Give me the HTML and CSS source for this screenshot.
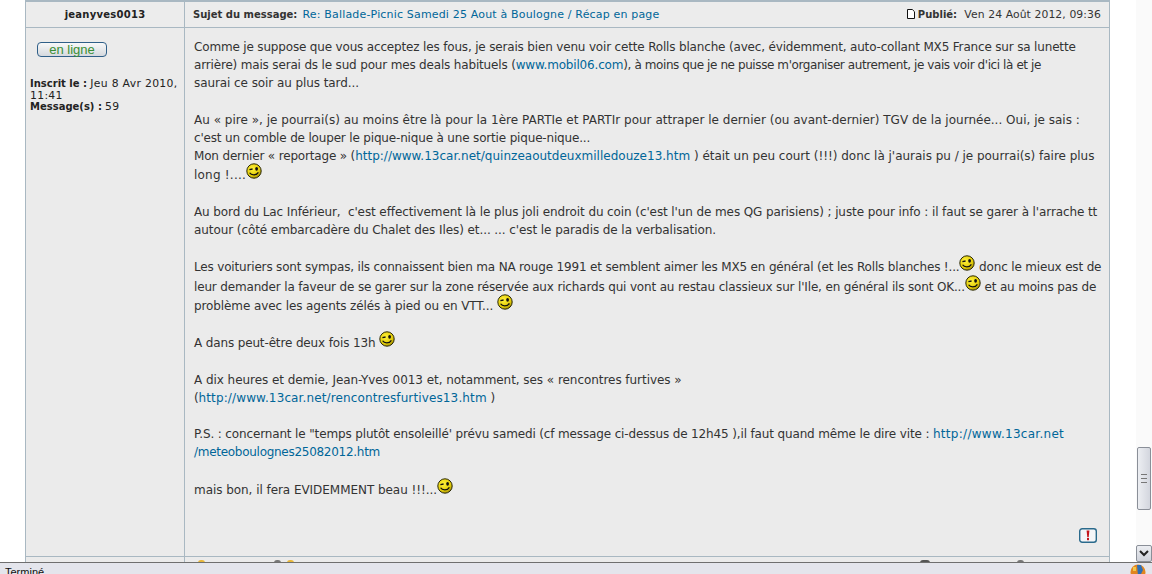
FILE: index.html
```html
<!DOCTYPE html>
<html lang="fr">
<head>
    <meta charset="UTF-8">
    <meta name="viewport" content="width=device-width, initial-scale=1.0">
    <title>Ballade-Picnic Samedi 25 Aout à Boulogne</title>
    <link rel="stylesheet" href="styles.css">
</head>
<body>
    <svg class="defs" width="0" height="0">
        <defs>
            <radialGradient id="smile-fill" cx="40%" cy="35%" r="70%">
                <stop offset="0" stop-color="#fff23c"/>
                <stop offset="0.7" stop-color="#e2cb08"/>
                <stop offset="1" stop-color="#8f7c04"/>
            </radialGradient>
            <symbol id="smile" viewBox="0 0 16 16">
                <circle cx="8" cy="8" r="7.2" fill="url(#smile-fill)" stroke="#2c2a06" stroke-width="1"/>
                <path d="M3.4 6.6l3.2-.6" stroke="#111" stroke-width="1.4" fill="none"/>
                <ellipse cx="10.6" cy="5.8" rx="1.4" ry="1.9" fill="#111"/>
                <path d="M3.6 9.8c1.6 2.8 6.8 3 8.8 -.4" stroke="#111" stroke-width="1.3" fill="none"/>
            </symbol>
        </defs>
    </svg>
    <div class="page">
        <div class="main">
            <div class="forum">
                <div class="post-head">
                    <div class="author">jeanyves0013</div>
                    <div class="subject">
                        <span><b>Sujet du message:</b> <a href="#">Re: Ballade-Picnic Samedi 25 Aout à Boulogne / Récap en page</a></span>
                        <span class="posted">
                            <svg class="doc-icon" width="8" height="10" viewBox="0 0 8 10"><path d="M.5.5h4.8l2.2 2.2v6.8h-7z" fill="#fff" stroke="#111"/></svg>
                            <b>Publié:</b> <span class="date">Ven 24 Août 2012, 09:36</span>
                        </span>
                    </div>
                </div>
                <div class="post-body">
                    <div class="profile">
                        <div class="online">en ligne</div>
                        <p class="details"><b>Inscrit le :</b> <span class="date">Jeu 8 Avr 2010,<br>11:41</span><br><b>Message(s) :</b> <span class="date">59</span></p>
                    </div>
                    <div class="message">
                        <div class="text">
                            Comme je suppose que vous acceptez les fous, je serais bien venu voir cette Rolls blanche (avec, évidemment, auto-collant MX5 France sur sa lunette<br>
                            arrière) mais serai ds le sud pour mes deals habituels (<a href="#">www.mobil06.com</a><span class="ls-m41">), à moins que je ne puisse m'organiser autrement, je vais voir d'ici là et je</span><br>
                            <span class="ls-m08">saurai ce soir au plus tard...</span><br>
                            <br>
                            <span class="ls-p01">Au « pire », je pourrai(s) au moins être là pour la 1ère PARTIe et PARTIr pour attraper le dernier (ou avant-dernier) TGV de la journée... Oui, je sais :</span><br>
                            c'est un comble de louper le pique-nique à une sortie pique-nique...<br>
                            Mon dernier « reportage » (<a class="ls-p01" href="#">http://www.13car.net/quinzeaoutdeuxmilledouze13.htm</a><span class="ls-m02"> ) était un peu court (!!!) donc là j'aurais pu / je pourrai(s) faire plus</span><br>
                            <span class="ls-p22">long !....</span><svg class="smiley"><use href="#smile"/></svg><br>
                            <br>
                            <span class="ls-m10">Au bord du Lac Inférieur,&nbsp; c'est effectivement là le plus joli endroit du coin (c'est l'un de mes QG parisiens) ; juste pour info : il faut se garer à l'arrache tt</span><br>
                            <span class="ls-m08">autour (côté embarcadère du Chalet des Iles) et... ... c'est le paradis de la verbalisation.</span><br>
                            <br>
                            Les voituriers sont sympas, ils connaissent bien ma NA rouge 1991 et semblent aimer les MX5 en général (et les Rolls blanches !...<svg class="smiley"><use href="#smile"/></svg> donc le mieux est de<br>
                            <span class="ls-m16">leur demander la faveur de se garer sur la zone réservée aux richards qui vont au restau classieux sur l'Ile, en général ils sont OK...</span><svg class="smiley"><use href="#smile"/></svg> et au moins pas de<br>
                            <span class="ls-m10">problème avec les agents zélés à pied ou en VTT... </span><svg class="smiley"><use href="#smile"/></svg><br>
                            <br>
                            <span class="ls-m14">A dans peut-être deux fois 13h </span><svg class="smiley"><use href="#smile"/></svg><br>
                            <br>
                            <span class="ls-m05">A dix heures et demie, Jean-Yves 0013 et, notamment, ses « rencontres furtives »</span><br>
                            (<a class="ls-p13" href="#">http://www.13car.net/rencontresfurtives13.htm</a> )<br>
                            <br>
                            <span class="ls-m14">P.S. : concernant le "temps plutôt ensoleillé' prévu samedi (cf message ci-dessus de 12h45 ),il faut quand même le dire vite : </span><a class="ls-p28" href="#">http://www.13car.net</a><br>
                            <a class="ls-m28" href="#">/meteoboulognes25082012.htm</a><br>
                            <br>
                            <span class="ls-m05">mais bon, il fera EVIDEMMENT beau !!!...</span><svg class="smiley"><use href="#smile"/></svg>
                        </div>
                        <div class="report">
                            <svg class="report-icon" width="18" height="15" viewBox="0 0 18 15">
                                <rect x=".7" y=".7" width="16.6" height="13.6" rx="2.5" fill="#f4f6f8" stroke="#2a6a8c" stroke-width="1.4"/>
                                <path d="M7.6 2.6h2.8l-.7 6.6h-1.4z" fill="#c4161c"/>
                                <rect x="8" y="10" width="2" height="2.2" fill="#c4161c"/>
                            </svg>
                        </div>
                    </div>
                </div>
                <div class="post-foot">
                    <div class="foot-left"></div>
                    <div class="foot-right">
                        <span class="foot-group">
                            <i class="foot-dot yellow"></i>
                            <i class="foot-dot grey gap"></i>
                            <i class="foot-dot yellow"></i>
                        </span>
                        <span class="foot-group">
                            <i class="foot-dot dark"></i>
                            <i class="foot-dot grey wide"></i>
                        </span>
                    </div>
                </div>
            </div>
            <div class="scrollbar">
                <div class="scroll-track">
                    <div class="scroll-thumb">
                        <span class="grip"></span>
                    </div>
                </div>
                <div class="scroll-down">
                    <svg width="10" height="7" viewBox="0 0 10 7"><path d="M1 1l4 4 4-4" fill="none" stroke="#222" stroke-width="2"/></svg>
                </div>
            </div>
        </div>
        <div class="status">
            <span class="status-text">Terminé</span>
            <svg class="status-icon" width="16" height="12" viewBox="0 0 16 12">
                <circle cx="8" cy="8" r="7.5" fill="#e2851f"/>
                <path d="M7 1h4l2 5-3 6H8z" fill="#2f6fb5"/>
                <path d="M3 3h3v4H3z" fill="#f2c84a"/>
            </svg>
        </div>
    </div>
</body>
</html>
```

FILE: styles.css
```css
html, body {
    margin: 0;
    padding: 0;
    height: 100%;
    overflow: hidden;
    background-color: #fff;
}
a {
    color: #006699;
    text-decoration: none;
}
.defs {
    position: absolute;
}
.page {
    display: flex;
    flex-direction: column;
    height: 574px;
    overflow: hidden;
    font-family: "DejaVu Sans", Verdana, sans-serif;
}
.main {
    flex: 1;
    min-height: 0;
    display: flex;
    justify-content: space-between;
    padding-left: 25px;
}
.forum {
    width: 1085px;
    box-sizing: border-box;
    border-left: 1px solid #a9b8c2;
    border-right: 1px solid #a9b8c2;
    border-top: 2px solid #a9b8c2;
    background-color: #ebebeb;
}
.post-head {
    display: flex;
    height: 25px;
    background-color: #ececec;
    border-bottom: 1px solid #a9b8c2;
    font-size: 10px;
    line-height: 25px;
    color: #333;
}
.author {
    width: 158px;
    flex-shrink: 0;
    text-align: center;
    font-weight: bold;
    letter-spacing: 0.25px;
    color: #222;
}
.subject {
    flex: 1;
    display: flex;
    justify-content: space-between;
    padding: 0 8px;
    border-left: 1px solid #a9b8c2;
}
.subject a {
    margin-left: 2px;
    font-size: 11px;
    letter-spacing: 0.17px;
}
.date {
    font-size: 10.8px;
}
.posted b {
    margin-right: 4px;
}
.posted .date {
    letter-spacing: 0.1px;
}
.details .date {
    letter-spacing: 0.33px;
}
.doc-icon {
    vertical-align: -1px;
}
.post-body {
    display: flex;
    height: 528px;
}
.profile {
    width: 158px;
    flex-shrink: 0;
    box-sizing: border-box;
    padding: 14px 4px 0;
    font-size: 10px;
    color: #222;
}
.online {
    width: 68px;
    height: 13px;
    margin-left: 7px;
    border: 1px solid #2f5f88;
    border-radius: 4px;
    background: linear-gradient(#f8f8f8, #d5d9de);
    font-family: "Liberation Sans", Arial, sans-serif;
    font-size: 13px;
    line-height: 13px;
    text-align: center;
    color: #3a8f36;
}
.details {
    margin: 21px 0 0;
    line-height: 11.5px;
}
.message {
    flex: 1;
    min-width: 0;
    display: flex;
    flex-direction: column;
    justify-content: space-between;
    border-left: 1px solid #a9b8c2;
    padding: 10px 9px 13px;
}
.text {
    font-size: 12px;
    line-height: 18.2px;
    letter-spacing: -0.17px;
    color: #333;
    white-space: nowrap;
}
/* the original font has other widths, these keep each line at its length */
.ls-m41 { letter-spacing: -0.41px; }
.ls-m28 { letter-spacing: -0.28px; }
.ls-m16 { letter-spacing: -0.16px; }
.ls-m14 { letter-spacing: -0.14px; }
.ls-m10 { letter-spacing: -0.10px; }
.ls-m08 { letter-spacing: -0.08px; }
.ls-m05 { letter-spacing: -0.05px; }
.ls-m02 { letter-spacing: -0.02px; }
.ls-p01 { letter-spacing: 0.01px; }
.ls-p13 { letter-spacing: 0.13px; }
.ls-p22 { letter-spacing: 0.22px; }
.ls-p28 { letter-spacing: 0.28px; }
.smiley {
    width: 16px;
    height: 16px;
    margin-top: -2px;
    vertical-align: 0;
}
.report {
    display: flex;
    justify-content: flex-end;
    padding-right: 3px;
}
.report-icon {
    display: block;
}
.post-foot {
    display: flex;
    height: 10px;
    border-top: 1px solid #a9b8c2;
}
.foot-left {
    width: 158px;
    flex-shrink: 0;
}
.foot-right {
    flex: 1;
    display: flex;
    justify-content: space-between;
    padding: 3px 85px 0 13px;
    border-left: 1px solid #a9b8c2;
}
.foot-group {
    display: flex;
    align-items: flex-start;
}
.foot-dot {
    display: block;
    width: 7px;
    height: 3px;
    border-radius: 3px 3px 0 0;
}
.foot-dot.gap {
    margin-left: 69px;
    margin-right: 6px;
}
.foot-dot.wide {
    margin-left: 87px;
}
.yellow {
    background-color: #e8b73a;
}
.grey {
    background-color: #777;
}
.dark {
    width: 10px;
    background-color: #555;
}
.scrollbar {
    width: 16px;
    display: flex;
    flex-direction: column;
    background-color: #fafafa;
}
.scroll-track {
    flex: 1;
    padding: 447px 0 0 1px;
}
.scroll-thumb {
    width: 14px;
    height: 63px;
    display: flex;
    align-items: center;
    justify-content: center;
    border: 1px solid #8a8f98;
    box-sizing: border-box;
    border-radius: 2px;
    background: linear-gradient(90deg, #eceef2, #d3d6de);
}
.grip {
    width: 6px;
    height: 7px;
    border-top: 1px solid #777;
    border-bottom: 1px solid #777;
    background: linear-gradient(#777, #777) center / 100% 1px no-repeat;
}
.scroll-down {
    height: 15px;
    display: flex;
    align-items: center;
    justify-content: center;
    border: 1px solid #8a8f98;
    border-radius: 2px;
    background: linear-gradient(#eceef2, #cfd2da);
}
.status {
    height: 11px;
    flex-shrink: 0;
    display: flex;
    justify-content: space-between;
    overflow: hidden;
    border-top: 1px solid #6f6f6f;
    background-color: #e4e5ec;
    font-family: "Liberation Sans", Arial, sans-serif;
    font-size: 11px;
    line-height: 13px;
    color: #111;
}
.status-text {
    padding: 3px 0 0 5px;
}
.status-icon {
    margin: 1px 6px 0 0;
}
```
